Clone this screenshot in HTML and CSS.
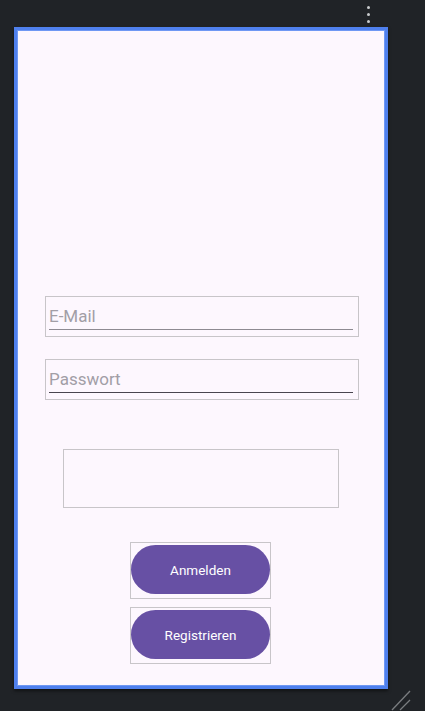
FILE: index.html
```html
<!DOCTYPE html>
<html lang="de">
<head>
<meta charset="utf-8">
<title>Login</title>
<link rel="stylesheet" href="styles.css">
</head>
<body>
<div class="topbar">
  <div class="menu"><span></span><span></span><span></span></div>
</div>
<div class="frame">
  <div class="field email">
    <div class="input">E-Mail</div>
  </div>
  <div class="field password">
    <div class="input">Passwort</div>
  </div>
  <div class="placeholder-box"></div>
  <div class="btn-wrap first"><button class="btn">Anmelden</button></div>
  <div class="btn-wrap"><button class="btn">Registrieren</button></div>
</div>
<svg class="grip" width="22" height="22" viewBox="0 0 22 22">
  <line x1="2" y1="21" x2="20" y2="2" stroke="#7a7d80" stroke-width="1.3"/>
  <line x1="10" y1="21" x2="20" y2="11" stroke="#7a7d80" stroke-width="1.3"/>
</svg>
</body>
</html>
```
FILE: styles.css
```css
html, body {
  margin: 0;
  padding: 0;
}
body {
  background: #202327;
  width: 425px;
  height: 711px;
  overflow: hidden;
  position: relative;
  font-family: Roboto, "Liberation Sans", sans-serif;
}
.topbar {
  height: 27px;
  display: flex;
  justify-content: flex-end;
  padding-right: 55px;
}
.menu {
  display: flex;
  flex-direction: column;
  align-items: center;
  gap: 4px;
  padding-top: 6px;
}
.menu span {
  width: 3px;
  height: 3px;
  border-radius: 50%;
  background: #c9cbcd;
}
.frame {
  margin-left: 14px;
  width: 368px;
  height: 656px;
  border: 3px solid #4f80ee;
  background: #fdf7fe;
  display: flex;
  flex-direction: column;
  box-shadow: inset 0 0 0 1px #6f98f4, 0 2px 3px rgba(0,0,0,0.5);
}
.field {
  margin-left: 28px;
  width: 304px;
  border: 1px solid #c8c5c9;
  padding: 9px 5px 6px 3px;
}
.email {
  margin-top: 266px;
}
.password {
  margin-top: 22px;
}
.input {
  font-size: 17px;
  line-height: 20px;
  color: #a29ea6;
  padding-bottom: 3px;
  border-bottom: 1px solid #8e8a92;
}
.password .input {
  border-bottom-color: #49454f;
}
.placeholder-box {
  margin-top: 49px;
  margin-left: 46px;
  width: 274px;
  height: 57px;
  border: 1px solid #c8c5c9;
}
.btn-wrap {
  margin-left: 113px;
  box-sizing: border-box;
  width: 141px;
  height: 57px;
  border: 1px solid #c8c5c9;
  display: flex;
  flex-direction: column;
  padding-top: 2px;
}
.btn-wrap.first {
  margin-top: 34px;
}
.btn-wrap + .btn-wrap {
  margin-top: 8px;
}
.btn {
  width: 139px;
  height: 49px;
  border: none;
  border-radius: 25px;
  background: #6750a4;
  color: #ffffff;
  font-family: Roboto, "Liberation Sans", sans-serif;
  font-weight: 400;
  font-size: 13.5px;
  padding: 0;
}
.grip {
  position: absolute;
  right: 13px;
  bottom: 0;
}
```
